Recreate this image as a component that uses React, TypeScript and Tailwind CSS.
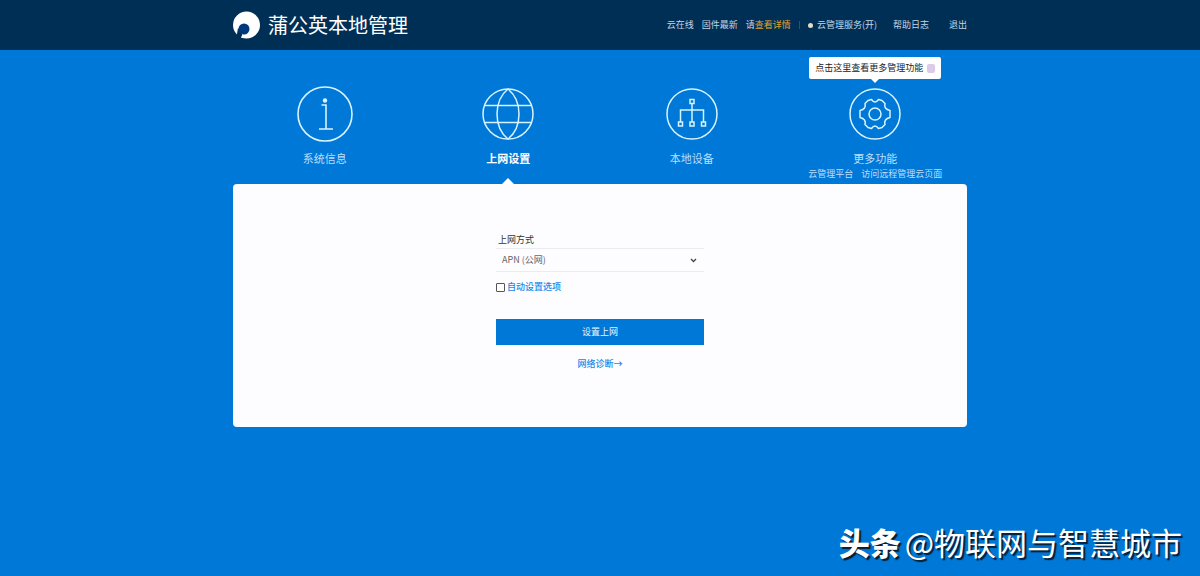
import React, { useState } from 'react';

interface NavItem {
  id: string;
  label: string;
  icon: React.ReactNode;
}

const InfoIcon = () => (
  <svg className="h-14 w-14" viewBox="0 0 56 56" fill="none" stroke="currentColor" strokeWidth="1.6">
    <circle cx="28" cy="28" r="27" />
    <circle cx="28" cy="14.5" r="2.2" fill="currentColor" stroke="none" />
    <path d="M24.5 19H29v23.5M22 43h14" />
  </svg>
);

const GlobeIcon = () => (
  <svg className="h-13 w-13" viewBox="0 0 52 52" fill="none" stroke="currentColor" strokeWidth="1.5">
    <circle cx="26" cy="26" r="25" />
    <path d="M3 17.5h46M3 34.5h46" />
    <path d="M26 1C18.5 7 15 16 15 26s3.5 19 11 25M26 1c7.5 6 11 15 11 25s-3.5 19-11 25" />
  </svg>
);

const DevicesIcon = () => (
  <svg className="h-13 w-13" viewBox="0 0 52 52" fill="none" stroke="currentColor" strokeWidth="1.5">
    <circle cx="26" cy="26" r="25" />
    <rect x="24" y="11.5" width="4" height="4" />
    <path d="M26 15.5V34M14.500 34V22H37.500v12" />
    <rect x="12.5" y="34" width="4" height="4" />
    <rect x="24" y="34" width="4" height="4" />
    <rect x="35.5" y="34" width="4" height="4" />
  </svg>
);

const GearIcon = () => (
  <svg className="h-13 w-13" viewBox="0 0 52 52" fill="none" stroke="currentColor" strokeWidth="1.5" strokeLinejoin="round">
    <circle cx="26" cy="26" r="25" />
    <circle cx="26" cy="26" r="6" />
    <path d="M19 12.500l3.500-1Q26 16.500 29.500 11.500l3.500 1 3 3Q34.500 21 41 22.500v7Q34.500 31 36 36.500l-3 3-3.500 1Q26 35.500 22.500 40.500l-3.500-1-3-3Q17.500 31 11 29.500v-7Q17.500 21 16 15.500z" />
  </svg>
);

const LogoIcon = () => (
  <svg className="h-7 w-7" viewBox="0 0 28 28">
    <circle cx="13.5" cy="14" r="13.5" fill="#fff" />
    <path d="M5 17l-1.500 9 4 1.500q2-2 1.500-5z" fill="#002f56" />
    <path d="M8 22q3 1.500 0 4.500l4 .5 2-5z" fill="#fff" />
    <circle cx="11" cy="18" r="5.5" fill="#00387c" />
  </svg>
);

const navItems: NavItem[] = [
  { id: 'info', label: '系统信息', icon: <InfoIcon /> },
  { id: 'network', label: '上网设置', icon: <GlobeIcon /> },
  { id: 'devices', label: '本地设备', icon: <DevicesIcon /> },
  { id: 'more', label: '更多功能', icon: <GearIcon /> },
];

const Header: React.FC = () => (
  <header className="bg-[#002f56]">
    <div className="mx-auto flex h-[50px] max-w-[734px] items-center justify-between">
      <div className="flex items-center gap-[7px] text-white">
        <LogoIcon />
        <h1 className="text-[20px] leading-7">蒲公英本地管理</h1>
      </div>
      <div className="flex items-center text-[9px] leading-4 text-[#c5d5e2]">
        <span>云在线</span>
        <span className="ml-2">固件最新</span>
        <span className="ml-2">
          请<a href="#detail" className="text-[#e0a030]">查看详情</a>
        </span>
        <span className="mx-2 h-2 w-px bg-[#2b5273]" />
        <span className="mr-1 h-[5px] w-[5px] rounded-sm bg-[#e3dccb]" />
        <a href="#bind">云管理服务(开)</a>
        <a href="#log" className="ml-4">帮助日志</a>
        <a href="#logout" className="ml-5">退出</a>
      </div>
    </div>
  </header>
);

const App: React.FC = () => {
  const [active, setActive] = useState('network');
  const [mode, setMode] = useState('apn');
  const [auto, setAuto] = useState(false);

  return (
    <div className="relative min-h-screen bg-[#0078d7] font-['Noto_Sans_CJK_SC',sans-serif]">
      <Header />
      <main className="mx-auto max-w-[734px]">
        <nav className="grid grid-cols-4 pt-9 pb-[2px] text-white">
          {navItems.map((item) => (
            <div key={item.id} className="relative text-center">
              <button onClick={() => setActive(item.id)} className="inline-flex flex-col items-center">
                <span className="flex h-14 items-center text-[#d8f4ff]">{item.icon}</span>
                <span className={`mt-2 text-[11px] leading-4 ${item.id === active ? 'font-bold text-white' : 'text-[#b9dfff]'}`}>
                  {item.label}
                </span>
              </button>
              {item.id === 'more' && (
                <>
                  <div className="flex justify-center gap-2 text-[9px] leading-4 whitespace-nowrap text-[#b9dfff]">
                    <a href="#cloud">云管理平台</a>
                    <a href="#remote">访问远程管理云页面</a>
                  </div>
                  <div className="absolute bottom-full left-1/2 mb-[7px] flex h-[22px] w-[132px] -translate-x-1/2 items-center justify-between rounded-xs bg-white px-[6px] text-[9px] whitespace-nowrap text-[#222]">
                    点击这里查看更多管理功能
                    <button aria-label="关闭" className="h-[9px] w-2 rounded-xs bg-[#dccbe8]" />
                    <span className="absolute top-full left-1/2 -translate-x-1/2 border-x-4 border-t-4 border-x-transparent border-t-white" />
                  </div>
                </>
              )}
              {item.id === active && (
                <span className="absolute -bottom-[2px] left-1/2 -translate-x-1/2 border-x-6 border-b-6 border-x-transparent border-b-white" />
              )}
            </div>
          ))}
        </nav>

        <section className="rounded-[4px] bg-[#fdfcff] pt-12 pb-[55px]">
          <form className="mx-auto w-[208px] text-[9px] leading-4" onSubmit={(e) => e.preventDefault()}>
            <label htmlFor="mode" className="block pl-[2px] text-[#333]">上网方式</label>
            <div className="relative">
              <select
                id="mode"
                value={mode}
                onChange={(e) => setMode(e.target.value)}
                className="block h-6 w-full appearance-none border-y border-[#ececf0] bg-transparent px-[6px] text-[#666]"
              >
                <option value="apn">APN (公网)</option>
                <option value="dhcp">自动获取</option>
              </select>
              <svg className="pointer-events-none absolute top-[10px] right-[7px] h-[5px] w-[7px]" viewBox="0 0 7 5" fill="none" stroke="#444" strokeWidth="1.3">
                <path d="M1 1l2.500 2.500L6 1" />
              </svg>
            </div>
            <div className="mt-[7px] flex h-4 items-center gap-[2px]">
              <input
                id="auto"
                type="checkbox"
                checked={auto}
                onChange={(e) => setAuto(e.target.checked)}
                className="h-[9px] w-[9px] appearance-none rounded-[1px] border border-[#555] bg-white checked:bg-[#0078d7]"
              />
              <label htmlFor="auto" className="font-medium text-[#1688e8]">自动设置选项</label>
            </div>
            <button type="submit" className="mt-6 block h-[26px] w-full bg-[#0078d7] text-[#e4f4ff]">设置上网</button>
            <div className="mt-[11px] text-center">
              <a href="#diagnose" className="font-medium text-[#1688e8]">网络诊断→</a>
            </div>
          </form>
        </section>
      </main>

      <div className="absolute right-[18px] bottom-3 flex items-center gap-1 text-[31px] leading-11 text-white [text-shadow:2px_2px_1px_#0a1c30]">
        <span className="font-black">头条</span>
        <span>@物联网与智慧城市</span>
      </div>
    </div>
  );
};

export default App;
